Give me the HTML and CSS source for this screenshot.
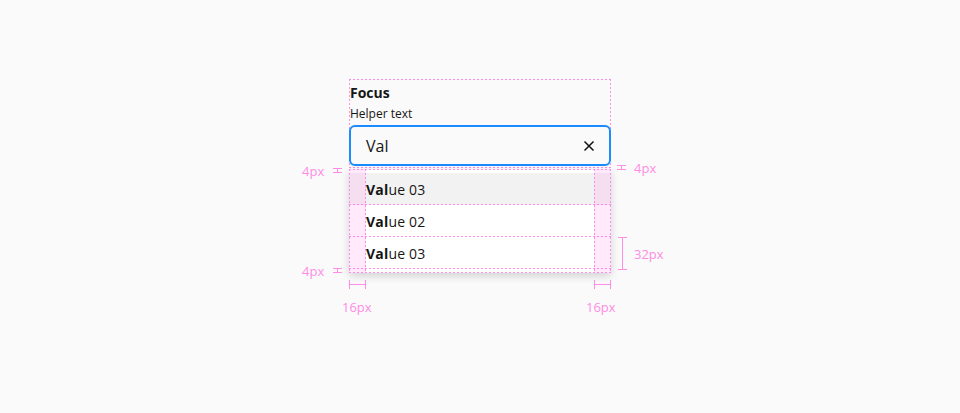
FILE: index.html
```html
<!DOCTYPE html>
<html>
<head>
<meta charset="utf-8">
<link rel="stylesheet" href="styles.css">
</head>
<body>
<div class="stage">
  <div class="field">
    <div class="head">
      <div class="label">Focus</div>
      <div class="helper">Helper text</div>
      <div class="input">
        <span class="value">Val</span>
        <svg class="clear" width="12" height="12" viewBox="0 0 12 12"><path d="M1.5 1.5 L10.5 10.5 M10.5 1.5 L1.5 10.5" stroke="#111" stroke-width="1.5" fill="none"/></svg>
      </div>
    </div>
    <div class="menu">
      <div class="item active"><b>Val</b>ue 03</div>
      <div class="item"><b>Val</b>ue 02</div>
      <div class="item"><b>Val</b>ue 03</div>
      <span class="col col-left"></span>
      <span class="col col-right"></span>
      <span class="hline hline-top"></span>
      <span class="hline hline-bottom"></span>
    </div>

    <span class="note n-4l">4px</span>
    <span class="tick t-4l"></span>
    <span class="note n-4r">4px</span>
    <span class="tick t-4r"></span>
    <span class="note n-4lb">4px</span>
    <span class="tick t-4lb"></span>
    <span class="vbar v-32"></span>
    <span class="note n-32">32px</span>
    <span class="hbar h-16l"></span>
    <span class="note n-16l">16px</span>
    <span class="hbar h-16r"></span>
    <span class="note n-16r">16px</span>
  </div>
</div>
</body>
</html>
```

FILE: styles.css
```css
:root {
  --pink: #ff8ce6;
  --dot-x: repeating-linear-gradient(90deg, #ff8ce6 0 2px, transparent 2px 4px);
  --dot-y: repeating-linear-gradient(180deg, #ff8ce6 0 2px, transparent 2px 4px);
}

html, body {
  margin: 0;
  padding: 0;
  background: #fafafa;
  font-family: "Open Sans", "Noto Sans", sans-serif;
  color: #161616;
}

.stage {
  width: 960px;
  height: 413px;
  display: flex;
  justify-content: center;
  padding-top: 79px;
  box-sizing: border-box;
}

.field {
  position: relative;
  width: 262px;
}

.head {
  position: relative;
  padding: 4px 0 0;
}

.head::before {
  content: "";
  position: absolute;
  top: 0;
  left: 0;
  right: 0;
  bottom: -2px;
  pointer-events: none;
  background:
    var(--dot-x) top / 100% 1px no-repeat,
    var(--dot-x) bottom / 100% 1px no-repeat,
    var(--dot-y) left / 1px 100% no-repeat,
    var(--dot-y) right / 1px 100% no-repeat;
}

.label {
  font-size: 14px;
  font-weight: 700;
  line-height: 20px;
  padding-left: 1px;
}

.helper {
  font-size: 12px;
  line-height: 18px;
  margin-top: 2px;
  margin-bottom: 2px;
  padding-left: 1px;
}

.input {
  position: relative;
  height: 41px;
  box-sizing: border-box;
  border: 2px solid #1a8cff;
  border-radius: 6px;
  background: #fafafa;
  display: flex;
  align-items: center;
  padding: 0 14px 0 15px;
}

.value {
  flex: 1;
  font-size: 16px;
  color: #161616;
}

.clear {
  display: block;
}

.menu {
  position: relative;
  margin-top: 3px;
  padding: 4px 0;
  background: #fff;
  border-radius: 2px;
  box-shadow: 0 3px 8px rgba(0, 0, 0, 0.16);
}

.item {
  height: 32px;
  box-sizing: border-box;
  padding: 0 16px 0 17px;
  display: flex;
  align-items: center;
  font-size: 14px;
  color: #161616;
  letter-spacing: 0.2px;
  background: var(--dot-x) bottom / 100% 1px no-repeat;
}

.item b {
  font-weight: 700;
}

.item.active {
  background: var(--dot-x) bottom / 100% 1px no-repeat, #f2f2f2;
}

.col {
  position: absolute;
  top: 0;
  bottom: 0;
  width: 17px;
  background:
    var(--dot-y) left / 1px 100% no-repeat,
    var(--dot-y) right / 1px 100% no-repeat,
    rgba(255, 110, 225, 0.15);
}

.col-left { left: 0; }
.col-right { right: 0; }

.hline {
  position: absolute;
  left: 0;
  right: 0;
  height: 1px;
  background: var(--dot-x);
}

.hline-top { top: 0; }
.hline-bottom { bottom: 0; }

.note {
  position: absolute;
  font-size: 13px;
  line-height: 16px;
  color: var(--pink);
}

.tick {
  position: absolute;
  width: 9px;
  height: 3px;
  border-top: 1px solid var(--pink);
  border-bottom: 1px solid var(--pink);
}

.tick::after {
  content: "";
  position: absolute;
  left: 4px;
  top: 0;
  width: 1px;
  height: 3px;
  background: var(--pink);
}

.n-4l { left: -47px; top: 84px; }
.t-4l { left: -16px; top: 89px; }

.n-4r { left: 285px; top: 81px; }
.t-4r { left: 268px; top: 86px; }

.n-4lb { left: -47px; top: 184px; }
.t-4lb { left: -16px; top: 189px; }

.vbar {
  position: absolute;
  left: 269px;
  top: 158px;
  width: 9px;
  height: 33px;
  box-sizing: border-box;
  border-top: 1px solid var(--pink);
  border-bottom: 1px solid var(--pink);
}

.vbar::after {
  content: "";
  position: absolute;
  left: 4px;
  top: 0;
  bottom: 0;
  width: 1px;
  background: var(--pink);
}

.n-32 { left: 285px; top: 167px; }

.hbar {
  position: absolute;
  top: 201px;
  width: 17px;
  height: 9px;
  box-sizing: border-box;
  border-left: 1px solid var(--pink);
  border-right: 1px solid var(--pink);
}

.hbar::after {
  content: "";
  position: absolute;
  left: 0;
  right: 0;
  top: 4px;
  height: 1px;
  background: var(--pink);
}

.h-16l { left: 0; }
.h-16r { left: 245px; }

.n-16l { left: -7px; top: 220px; }
.n-16r { left: 237px; top: 220px; }
```
